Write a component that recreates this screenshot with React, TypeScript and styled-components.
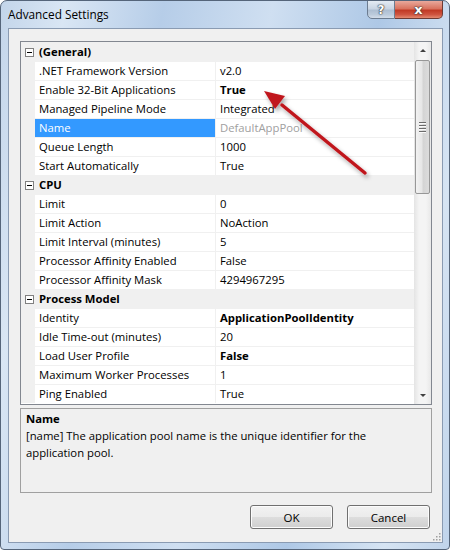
import styled, { createGlobalStyle } from "styled-components"

const Global = createGlobalStyle`
  html, body {
    margin: 0;
    padding: 0;
    background: #ffffff;
  }
  body {
    font-family: "Open Sans", "Noto Sans", sans-serif;
    font-size: 11.3px;
    color: #000;
  }
`

const Window = styled.div`
  position: relative;
  width: 450px;
  height: 550px;
  box-sizing: border-box;
  border: 1px solid #55657a;
  border-radius: 7px 7px 4px 4px;
  background: linear-gradient(
    100deg,
    #c3d5ea 0%,
    #d9e6f4 12%,
    #b6cde8 30%,
    #cfdff1 50%,
    #aec8e6 70%,
    #d6e4f3 88%,
    #c0d4eb 100%
  );
  display: flex;
  flex-direction: column;
  overflow: hidden;
`

const TitleBar = styled.div`
  height: 27px;
  display: flex;
  align-items: flex-start;
  padding-left: 7px;
`

const Title = styled.span`
  line-height: 27px;
  font-size: 11.8px;
  color: #000;
`

const Caption = styled.div`
  margin-left: auto;
  margin-right: 6px;
  margin-top: -1px;
  display: flex;
`

const CapButton = styled.div<{ $close?: boolean }>`
  height: 19px;
  width: ${p => (p.$close ? "48px" : "28px")};
  box-sizing: border-box;
  border: 1px solid ${p => (p.$close ? "#6e3b34" : "#6c7c90")};
  border-left-width: ${p => (p.$close ? "0" : "1px")};
  border-radius: ${p => (p.$close ? "0 0 5px 0" : "0 0 0 5px")};
  background: ${p =>
    p.$close
      ? "linear-gradient(#e9a99c 0%, #d9735f 45%, #c13a25 55%, #cf5540 80%, #e48a70 100%)"
      : "linear-gradient(#e4ebf3 0%, #c9d5e3 45%, #aebfd2 55%, #bccbdc 80%, #d3dde9 100%)"};
  display: flex;
  align-items: center;
  justify-content: center;
  color: #fff;
  font-family: "DejaVu Sans", sans-serif;
  font-weight: bold;
  font-size: ${p => (p.$close ? "13px" : "12px")};
  text-shadow: 0 0 1px #333, 0 0 1px #333, 0 0 2px #444;
`

const Client = styled.div`
  position: relative;
  flex: 1;
  margin: 0 6px 6px 7px;
  background: #f0f0f0;
  border: 1px solid #8a9bb2;
  padding: 12px 10px 13px 11px;
  display: flex;
  flex-direction: column;
`

const Grid = styled.div`
  height: 364px;
  box-sizing: border-box;
  border: 1px solid #828790;
  background: #fff;
  display: flex;
  overflow: hidden;
`

const List = styled.div`
  flex: 1;
  display: flex;
  flex-direction: column;
`

const Row = styled.div<{ $category?: boolean }>`
  height: 19px;
  flex: none;
  box-sizing: border-box;
  display: grid;
  grid-template-columns: 14px 181px 1fr;
  background: ${p => (p.$category ? "#f0f0f0" : "#fff")};
  border-top: 1px solid #f0f0f0;
  line-height: 18px;
  white-space: nowrap;
`

const Strip = styled.div`
  background: #f0f0f0;
  display: flex;
  align-items: center;
  justify-content: center;
`

const Toggle = styled.div`
  width: 9px;
  height: 9px;
  box-sizing: border-box;
  border: 1px solid #808080;
  background: #fff;
  display: flex;
  align-items: center;
  justify-content: center;
  margin-left: 2px;

  &::after {
    content: "";
    width: 5px;
    height: 1px;
    background: #000;
  }
`

const CategoryLabel = styled.div`
  grid-column: 2 / 4;
  padding-left: 4px;
  font-weight: bold;
`

const NameCell = styled.div<{ $selected?: boolean }>`
  padding-left: 4px;
  border-right: 1px solid #f0f0f0;
  background: ${p => (p.$selected ? "#3399ff" : "transparent")};
  color: ${p => (p.$selected ? "#fff" : "#000")};
  overflow: hidden;
`

const ValueCell = styled.div<{ $bold?: boolean; $readonly?: boolean }>`
  padding-left: 4px;
  font-weight: ${p => (p.$bold ? "bold" : "normal")};
  color: ${p => (p.$readonly ? "#a0a0a0" : "#000")};
  overflow: hidden;
`

const Scrollbar = styled.div`
  width: 17px;
  flex: none;
  background: linear-gradient(90deg, #e4e4e4, #f4f4f4 30%, #f4f4f4 70%, #e8e8e8);
  display: flex;
  flex-direction: column;
`

const ArrowBtn = styled.div<{ $down?: boolean }>`
  height: 17px;
  flex: none;
  display: flex;
  align-items: center;
  justify-content: center;

  &::after {
    content: "";
    border-left: 3px solid transparent;
    border-right: 3px solid transparent;
    ${p => (p.$down ? "border-top: 3px solid #404040;" : "border-bottom: 3px solid #404040;")}
  }
`

const Track = styled.div`
  flex: 1;
  padding: 1px 1px 0 1px;
`

const Thumb = styled.div`
  height: 134px;
  box-sizing: border-box;
  border: 1px solid #979797;
  border-radius: 2px;
  background: linear-gradient(90deg, #f2f2f2, #e6e6e6 45%, #d4d4d4 55%, #dcdcdc);
  display: flex;
  flex-direction: column;
  align-items: center;
  justify-content: center;
  gap: 1px;
`

const GripLine = styled.div`
  width: 7px;
  height: 1px;
  background: #6b6b6b;
  border-bottom: 1px solid #fafafa;
`

const Description = styled.div`
  margin-top: 3px;
  height: 85px;
  box-sizing: border-box;
  border: 1px solid #a0a0a0;
  padding: 1px 5px;
  line-height: 17px;
`

const DescTitle = styled.div`
  font-weight: bold;
`

const DescText = styled.div`
  padding-right: 50px;
`

const ButtonRow = styled.div`
  margin-top: 12px;
  padding-right: 2px;
  display: flex;
  justify-content: flex-end;
  gap: 14px;
`

const Button = styled.button`
  width: 83px;
  height: 24px;
  box-sizing: border-box;
  border: 1px solid #707070;
  border-radius: 3px;
  background: linear-gradient(#f2f2f2 0%, #ebebeb 50%, #dddddd 51%, #cfcfcf 100%);
  box-shadow: inset 0 0 0 1px #fcfcfc;
  font-family: "Open Sans", "Noto Sans", sans-serif;
  font-size: 11.5px;
  color: #000;
  padding: 0;
`

const Grip = styled.svg`
  position: absolute;
  right: 1px;
  bottom: 1px;
`

const Overlay = styled.svg`
  position: absolute;
  left: 0;
  top: 0;
  pointer-events: none;
`

type Prop = { name: string; value: string; bold?: boolean; selected?: boolean; readonly?: boolean }
type Category = { title: string; props: Prop[] }

const data: Category[] = [
  {
    title: "(General)",
    props: [
      { name: ".NET Framework Version", value: "v2.0" },
      { name: "Enable 32-Bit Applications", value: "True", bold: true },
      { name: "Managed Pipeline Mode", value: "Integrated" },
      { name: "Name", value: "DefaultAppPool", selected: true, readonly: true },
      { name: "Queue Length", value: "1000" },
      { name: "Start Automatically", value: "True" },
    ],
  },
  {
    title: "CPU",
    props: [
      { name: "Limit", value: "0" },
      { name: "Limit Action", value: "NoAction" },
      { name: "Limit Interval (minutes)", value: "5" },
      { name: "Processor Affinity Enabled", value: "False" },
      { name: "Processor Affinity Mask", value: "4294967295" },
    ],
  },
  {
    title: "Process Model",
    props: [
      { name: "Identity", value: "ApplicationPoolIdentity", bold: true },
      { name: "Idle Time-out (minutes)", value: "20" },
      { name: "Load User Profile", value: "False", bold: true },
      { name: "Maximum Worker Processes", value: "1" },
      { name: "Ping Enabled", value: "True" },
    ],
  },
]

export default function App() {
  return (
    <>
      <Global />
      <Window>
        <TitleBar>
          <Title>Advanced Settings</Title>
          <Caption>
            <CapButton>?</CapButton>
            <CapButton $close>x</CapButton>
          </Caption>
        </TitleBar>

        <Client>
          <Grid>
            <List>
              {data.map(cat => (
                <div key={cat.title} style={{ display: "contents" }}>
                  <Row $category>
                    <Strip>
                      <Toggle />
                    </Strip>
                    <CategoryLabel>{cat.title}</CategoryLabel>
                  </Row>
                  {cat.props.map(p => (
                    <Row key={p.name}>
                      <Strip />
                      <NameCell $selected={p.selected}>{p.name}</NameCell>
                      <ValueCell $bold={p.bold} $readonly={p.readonly}>{p.value}</ValueCell>
                    </Row>
                  ))}
                </div>
              ))}
            </List>
            <Scrollbar>
              <ArrowBtn />
              <Track>
                <Thumb>
                  <GripLine />
                  <GripLine />
                  <GripLine />
                  <GripLine />
                </Thumb>
              </Track>
              <ArrowBtn $down />
            </Scrollbar>
          </Grid>

          <Description>
            <DescTitle>Name</DescTitle>
            <DescText>[name] The application pool name is the unique identifier for the application pool.</DescText>
          </Description>

          <ButtonRow>
            <Button>OK</Button>
            <Button>Cancel</Button>
          </ButtonRow>

          <Grip width="10" height="10" viewBox="0 0 10 10">
            {[[8, 2], [8, 5], [5, 5], [8, 8], [5, 8], [2, 8]].map(([x, y]) => (
              <rect key={`${x}-${y}`} x={x} y={y} width="1.5" height="1.5" fill="#a0a0a0" />
            ))}
          </Grip>
        </Client>

        <Overlay width="450" height="550" viewBox="0 0 450 550">
          <defs>
            <filter id="shadow" x="-20%" y="-20%" width="140%" height="140%">
              <feDropShadow dx="2" dy="3" stdDeviation="2" floodColor="#000" floodOpacity="0.35" />
            </filter>
          </defs>
          <g filter="url(#shadow)">
            <path d="M364 172 L281 104" stroke="#c0181e" strokeWidth="3.5" strokeLinecap="round" fill="none" />
            <path d="M263 90 L284 95 L274 108 Z" fill="#c0181e" />
          </g>
        </Overlay>
      </Window>
    </>
  )
}
